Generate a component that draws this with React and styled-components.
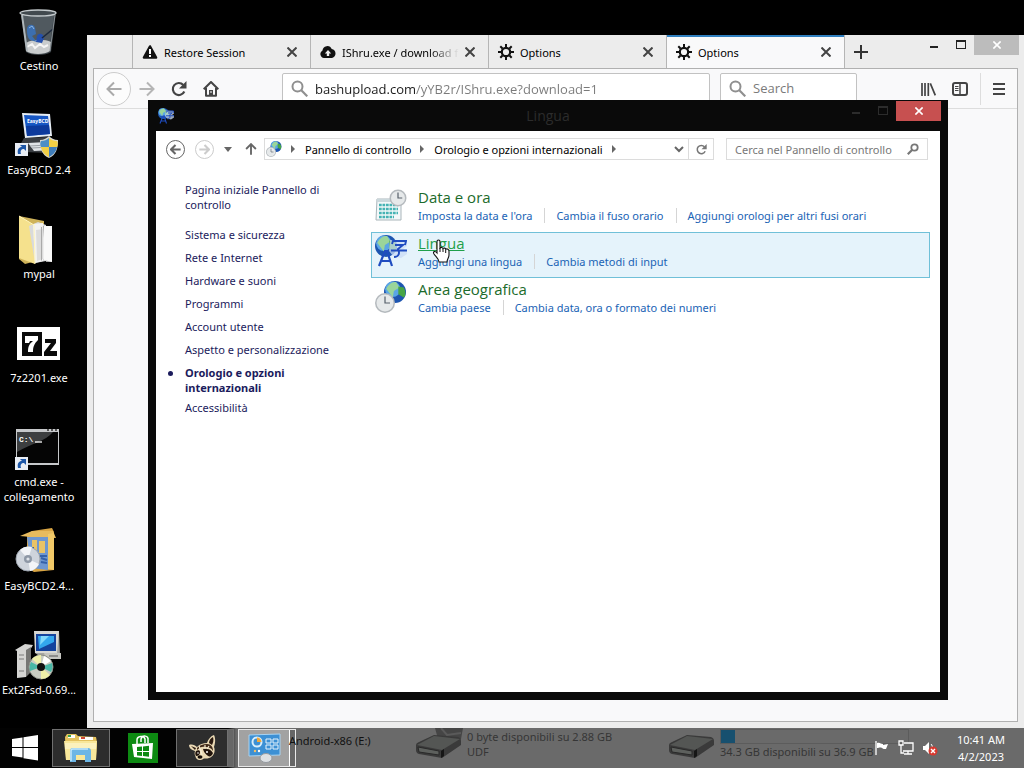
import React from 'react'
import styled, { createGlobalStyle } from 'styled-components'

const GlobalStyle = createGlobalStyle`
*{
  box-sizing:border-box;
}
body{
  margin:0;
  background:#000;
  overflow:hidden;
}
body, button, input{
  font-family:"Noto Sans", "Open Sans", sans-serif;
  font-size:11px;
  line-height:15px;
}
button{
  border:0;
  padding:0;
  background:none;
  color:inherit;
}
a{
  text-decoration:none;
}
svg{
  display:block;
  flex-shrink:0;
}
`

/* ---------- desktop icons ---------- */

const Shortcut = () => (
  <g>
    <rect x="0" y="31" width="13" height="13" fill="#e8edf4" />
    <path d="M3 42c-1-5 1-7 4-7l-2-2h6v6l-2-2c-3 0-4 2-3 5z" fill="#1d57a8" />
  </g>
)

const BinIcon = () => (
  <svg width="48" height="48" viewBox="0 0 48 48">
    <path d="M6 4h35l-5 40c-5 4-20 4-25 0z" fill="#3c4348" />
    <path d="M8 7l5 35c5 3 16 3 21 0l5-35z" fill="#596269" opacity=".7" />
    <path d="M11 35c6-4 19-4 25-1l-1 9c-5 4-19 4-24 0z" fill="#c9cccd" />
    <path d="M12 39l5-3 3 4 5-4 4 3 4-2" stroke="#f5f5f5" strokeWidth="2" fill="none" />
    <path d="M12 21c0-5 7-6 8-1l1 6-4 2 5 6-7-2c-3-3-3-8-3-11z" fill="#3c6fb0" />
    <path d="M22 28c2-4 7-2 7 2l-2 5-6-1z" fill="#2450ae" />
    <path d="M14 20l3-2 2 3" stroke="#8fb8e4" strokeWidth="1" fill="none" />
    <path d="M27 30l11-9" stroke="#1e2a3c" strokeWidth="1.5" />
    <path d="M7 7l5 36" stroke="#aeb6ba" strokeWidth="2" />
    <path d="M40 7l-5 36" stroke="#888f94" strokeWidth="1" />
    <ellipse cx="23" cy="5" rx="18" ry="3" fill="#41494e" stroke="#c4cacd" strokeWidth="1.3" />
  </svg>
)

const EasyBcdIcon = () => (
  <svg width="48" height="48" viewBox="0 0 48 48">
    <path d="M9 26l24-1 6 8-5 8-25-1-4-7z" fill="#3a3e43" />
    <path d="M13 31l18-1 8 8-20 1z" fill="#dfe3e7" />
    <path d="M15 34l17-1M17 36l18-1" stroke="#9aa0a6" />
    <path d="M7 1l28 1 2 22-27 2z" fill="#e6edf5" />
    <path d="M9 3l24 1 2 18-23 2z" fill="#1757c4" />
    <path d="M11 14l23-1 1 9-23 2z" fill="#0d3a9c" />
    <text x="12" y="11" fontSize="5" fontWeight="700" fill="#fff">EasyBCD</text>
    <path d="M25 28c4 0 7-2 9-4 2 2 5 4 9 4 0 9-2 15-9 18-7-3-9-9-9-18z" fill="#d9d9d2" />
    <path d="M34 26v9h-8c-1-2-1-4 0-6 3 0 6-1 8-3z" fill="#4d8fc6" />
    <path d="M34 26v9h8c1-2 1-4 0-6-3 0-6-1-8-3z" fill="#f2cf45" />
    <path d="M26 35h8v10c-4-2-7-5-8-10z" fill="#f2cf45" />
    <path d="M42 35h-8v10c4-2 7-5 8-10z" fill="#3f7dba" />
    <Shortcut />
  </svg>
)

const FolderIcon = () => (
  <svg width="48" height="52" viewBox="0 0 48 52">
    <path d="M4 2l25 5v38l-19 5-6-5z" fill="#cfb35a" />
    <path d="M4 2l15 9 1 39-16-6z" fill="#f5e18d" />
    <path d="M14 12l9-4 8 3v36l-11 2z" fill="#d9dadb" />
    <path d="M18 10l10-1v38l-8 2z" fill="#f2f2f2" />
    <path d="M25 12h12v36l-11-4z" fill="#ededed" />
    <path d="M21 16l7-1v30l-6 2z" fill="#dcdcdc" />
    <path d="M26 13h1v34l-1-1zM28 12h9v36h-6z" fill="#a9a9a9" />
    <path d="M29 12h8v36l-8-2z" fill="#f9f9f9" />
    <path d="M4 2l15 9 1 39" stroke="#fff5bd" fill="none" />
  </svg>
)

const SevenZipIcon = () => (
  <svg width="48" height="48" viewBox="0 0 48 48">
    <rect x="2" y="7" width="43" height="33" fill="#fff" />
    <rect x="7" y="12" width="20" height="24" fill="#0a0a0a" />
    <path d="M10 16h13v4c-4 4-5 7-5 12h-5c0-5 1-8 5-11h-3l-1 2h-4z" fill="#fff" />
    <path d="M30 19h11v4l-6 8h7v5H29v-4l7-9h-6z" fill="#0a0a0a" />
  </svg>
)

const CmdIcon = () => (
  <svg width="48" height="48" viewBox="0 0 48 48">
    <rect x="1" y="5" width="43" height="36" fill="#c6c8ca" />
    <rect x="2" y="8" width="41" height="31" fill="#050505" />
    <path d="M2 8h36c-8 10-21 11-36 20z" fill="#3d3f40" />
    <path d="M32 6h2M36 6h2M40 6h2" stroke="#555" strokeWidth="2" />
    <text x="4" y="18" fontSize="8" fontFamily="Liberation Mono" fontWeight="700" fill="#fff">C:\</text>
    <path d="M20 18h7" stroke="#fff" strokeWidth="1.3" />
    <g transform="translate(0 2)"><Shortcut /></g>
  </svg>
)

const BoxDiscIcon = () => (
  <svg width="48" height="48" viewBox="0 0 48 48">
    <path d="M17 3l20-3 2 4v38l-20 2-7-4V8z" fill="#d9a544" />
    <path d="M5 8l12-5 21 0 3 7-25-1z" fill="#e7bb5e" />
    <path d="M33 6l6-1v37l-6-1z" fill="#f1c968" />
    <path d="M12 9h21v33l-17-2z" fill="#6e97d0" />
    <path d="M17 12h5v13h-5zM24 13h6v12h-6z" fill="#e9c366" />
    <path d="M15 20h3v9h-3zM26 30l6 2M26 34l6 1M24 28h8" stroke="#3561a8" strokeWidth="2" fill="none" />
    <circle cx="13" cy="31" r="12" fill="#ced4dc" stroke="#99a1ab" />
    <path d="M13 31L5 22c4-4 9-4 12-3zM13 31l11 5c-2 4-6 7-9 7z" fill="#f3f5f8" />
    <circle cx="13" cy="31" r="4" fill="#8e98a6" />
    <circle cx="13" cy="31" r="1.6" fill="#dfe4ea" />
  </svg>
)

const InstallIcon = () => (
  <svg width="48" height="50" viewBox="0 0 48 50">
    <path d="M19 0h25v22H20z" fill="#d8d8d4" />
    <path d="M44 0l1 24-3 4H29l-9-6h22z" fill="#a5a5a0" />
    <rect x="21" y="3" width="20" height="17" fill="#15439d" />
    <path d="M23 5h16v6L24 18z" fill="#33a7ee" />
    <path d="M26 5h8l-9 9z" fill="#81d8fb" />
    <path d="M29 22h17v6H31z" fill="#c5c5c0" />
    <path d="M34 25h9" stroke="#555" />
    <path d="M0 19l10-6 8 1-3 5-4 2v25l-9 1V20z" fill="#d5d5d3" />
    <path d="M11 19l5-3v25l-5 5z" fill="#767674" />
    <path d="M4 24h5M4 28h5M4 40h5" stroke="#999" strokeWidth="1.5" />
    <circle cx="26" cy="36" r="12" fill="#c9cdc2" stroke="#8b8f87" />
    <path d="M26 36l-9-8c3-3 6-4 9-4zM26 36l9 8c-3 3-6 4-9 4z" fill="#eff0a9" />
    <path d="M26 36l11-4c1 4 0 7-1 9zM26 36l-11 4c-1-4 0-7 1-9z" fill="#48b7a6" />
    <path d="M26 36l3-11c3 1 5 3 7 5z" fill="#fff" />
    <circle cx="26" cy="36" r="4" fill="#111" />
  </svg>
)

/* ---------- small glyphs ---------- */

const Cross = ({ size = 10, width = 2 }) => (
  <svg width={size} height={size} viewBox="0 0 10 10" stroke="currentColor" strokeWidth={width} fill="none">
    <path d="M.5.5l9 9M9.5.5l-9 9" />
  </svg>
)

const MinGlyph = () => (
  <svg width="12" height="12" viewBox="0 0 12 12"><path d="M2 7h8v2H2z" fill="currentColor" /></svg>
)

const MaxGlyph = () => (
  <svg width="12" height="12" viewBox="0 0 12 12"><path d="M1 1h10v9H1zM2 3v6h8V3z" fillRule="evenodd" fill="currentColor" /></svg>
)

const WarnGlyph = () => (
  <svg width="16" height="16" viewBox="0 0 16 16">
    <path d="M8 2.500L14 13.500H2z" stroke="#111" strokeWidth="2.600" strokeLinejoin="round" fill="#111" />
    <path d="M7 5h2v5H7zM7 11h2v2H7z" fill="#fff" />
  </svg>
)

const CloudGlyph = () => (
  <svg width="16" height="16" viewBox="0 0 16 16">
    <path d="M4 14a4 4 0 0 1-1.500-7.500A4.800 4.800 0 0 1 11.700 5 4.600 4.600 0 0 1 12 14z" fill="#111" />
    <path d="M8 6l3.200 3.500H9.200V12H6.800V9.500H4.800z" fill="#f0f0f0" />
  </svg>
)

const GearGlyph = () => (
  <svg width="16" height="16" viewBox="0 0 16 16" stroke="#111" fill="none">
    <circle cx="8" cy="8" r="4.200" strokeWidth="2.200" />
    <path d="M8 0v3M8 13v3M0 8h3M13 8h3M2.300 2.300l2.200 2.200M11.500 11.500l2.200 2.200M13.700 2.300l-2.200 2.200M4.500 11.500l-2.200 2.200" strokeWidth="2" />
  </svg>
)

const LensGlyph = () => (
  <svg width="17" height="17" viewBox="0 0 17 17" stroke="#8f8f8f" fill="none">
    <circle cx="6.500" cy="6.500" r="5" strokeWidth="2" />
    <path d="M10.300 10.300l6 6" strokeWidth="2.200" />
  </svg>
)

const Arrow = ({ size = 16, width = 2, turn = 0 }) => (
  <svg width={size} height={size} viewBox="0 0 16 16" stroke="currentColor" strokeWidth={width} fill="none">
    <path d="M15.500 8H1.500M8 1.500L1.500 8 8 14.500" transform={`rotate(${turn} 8 8)`} />
  </svg>
)

const ReloadGlyph = ({ size = 16 }) => (
  <svg width={size} height={size} viewBox="0 0 16 16">
    <path d="M13.300 10.500A6 6 0 1 1 12.300 4" stroke="currentColor" strokeWidth="2.200" fill="none" />
    <path d="M15.500 0v7.500H8z" fill="currentColor" />
  </svg>
)

const HomeGlyph = () => (
  <svg width="16" height="16" viewBox="0 0 16 16">
    <path d="M.7 8.300L8 1l7.300 7.300M3 7v7.800h10V7" stroke="#444" strokeWidth="2" fill="none" strokeLinejoin="round" />
    <path d="M6 9h4v6H6z" fill="#444" />
    <path d="M8 10v2" stroke="#fff" />
  </svg>
)

const LibraryGlyph = () => (
  <svg width="16" height="14" viewBox="0 0 16 14" stroke="#444" strokeWidth="2">
    <path d="M2 1v13M5 1v13M8.300 1v13M10.300 1.300l5 12" strokeWidth="1.700" />
  </svg>
)

const SidebarGlyph = () => (
  <svg width="16" height="14" viewBox="0 0 16 14" stroke="#444" fill="none">
    <rect x="1" y="1" width="14" height="12" rx="2" strokeWidth="2" />
    <path d="M8 1v12" strokeWidth="1.500" />
    <path d="M3 4.500h3.500M3 6.500h3.500M3 8.500h3.500" />
  </svg>
)

const MenuGlyph = () => (
  <svg width="12" height="12" viewBox="0 0 12 12"><path d="M0 0h12v2H0zM0 5h12v2H0zM0 10h12v2H0z" fill="#444" /></svg>
)

const Globe = ({ cx, cy, r }) => (
  <g>
    <circle cx={cx} cy={cy} r={r} fill="#1d55b0" />
    <circle cx={cx - r * 0.2} cy={cy - r * 0.25} r={r * 0.7} fill="#5aa6e6" />
    <path
      d={`M${cx - r * 0.8} ${cy - r * 0.3}q${r * 0.4} ${-r * 0.7} ${r * 0.9} ${-r * 0.6}l${r * 0.3} ${r * 0.5}l${-r * 0.5} ${r * 0.3}l${-r * 0.1} ${r * 0.6}z`}
      fill="#9ad59a"
    />
    <path
      d={`M${cx + r * 0.3} ${cy - r * 0.5}l${r * 0.5} ${r * 0.1}q${r * 0.3} ${r * 0.6} 0 ${r * 0.9}l${-r * 0.5} ${-r * 0.3}z`}
      fill="#47a545"
    />
  </g>
)

const ClockFace = ({ cx, cy, r }) => (
  <g>
    <circle cx={cx} cy={cy} r={r} fill="#b4b9bd" />
    <circle cx={cx} cy={cy} r={r - 1.5} fill="#e6e9ea" />
    <path d={`M${cx} ${cy - r * 0.65}V${cy}H${cx + r * 0.5}`} stroke="#56606a" strokeWidth="1.200" fill="none" />
  </g>
)

const RegionIcon = ({ size = 32 }) => (
  <svg width={size} height={size} viewBox="0 0 32 32">
    <Globe cx={20} cy={11} r={11} />
    <ClockFace cx={10} cy={22} r={10} />
  </svg>
)

const LanguageIcon = ({ size = 32 }) => (
  <svg width={size} height={size} viewBox="0 0 32 32">
    <Globe cx={11} cy={11} r={11} />
    <path d="M15 5l17 1v5l-4 3 4 1v4l-6 4-8-2-4-5z" fill="#c9dcf5" opacity=".75" />
    <g stroke="#1f4cc0" fill="none" strokeWidth="1.900">
      <path d="M17 9l1-3h13l-1 4M20 10h8l-5 4c2 4 1 8-4 8M16 15.500h16" />
      <path d="M4 31l6-15h2l5 15M7 26h8" strokeWidth="2.200" />
    </g>
  </svg>
)

const DateIcon = () => (
  <svg width="32" height="32" viewBox="0 0 32 32">
    <path d="M2 10h24v21H1z" fill="#f3f8f9" stroke="#a9b5ba" />
    <path d="M2 10h24v3H2z" fill="#cbd8dc" />
    <path d="M4 16h19M4 20h19M4 24h19M4 28h15" stroke="#45b3b4" strokeWidth="2.700" strokeDasharray="2.700 .8" />
    <ClockFace cx={23} cy={9} r={8.5} />
  </svg>
)

const HandCursor = () => (
  <svg width="18" height="24" viewBox="0 0 18 24">
    <path
      d="M5 14V2.500c0-2 3-2 3 0V9c1-1 2.500-.7 3 .5 1-.8 2.400-.4 2.700.7 1.500-.7 3.300 0 3.300 2V16c0 3-2 4-2 7H7c0-3-3-5-5-8-1.500-2.500 1-3.500 3-1z"
      fill="#fff" stroke="#111" strokeWidth="1.100"
    />
    <path d="M8 9v4M11 10v3M13.700 10.500V14" stroke="#111" fill="none" />
  </svg>
)

/* ---------- taskbar drawings ---------- */

const StartLogo = () => (
  <svg width="26" height="26" viewBox="0 0 26 26" fill="#fff">
    <path d="M0 4l10.500-1.500V12H0zM11.500 2.300L26 0v12H11.500zM0 13h10.500v9.500L0 21zM11.500 13H26v12.500l-14.500-2.300z" />
  </svg>
)

const ExplorerLogo = () => (
  <svg width="34" height="30" viewBox="0 0 34 30">
    <path d="M1 4l2-3h9l2 2 18 1 1 5-1 17-30 1z" fill="#e3c15d" />
    <path d="M4 2h7v3H4zM15 4h14v3H15z" fill="#fff" />
    <path d="M4 2h3v2H4z" fill="#38a44c" /><path d="M17 4h4v2h-4z" fill="#d04b38" />
    <path d="M0 8h33l-1 19H2z" fill="#f8e79a" />
    <path d="M1 10h31v6H1z" fill="#fbf1bd" />
    <path d="M6 29V18c0-2 1-3 3-3h15c2 0 3 1 3 3v11h-6v-7h-9v7z" fill="#6cb6e6" />
    <path d="M7 28V18c0-1 1-2 2-2h15" stroke="#c3e8fb" strokeWidth="1.500" fill="none" />
  </svg>
)

const StoreLogo = () => (
  <svg width="30" height="30" viewBox="0 0 30 30">
    <rect width="30" height="30" fill="#0d8a12" />
    <path d="M9 11V7c0-4 7-5 8-1v4M13 9V6c1-4 8-4 7 1v3" stroke="#fff" strokeWidth="1.500" fill="none" />
    <path d="M4 11l21-1-1 16-18-2z" fill="#fff" />
    <path d="M9 14l5-.5V18H9zM15 13.400l6-.6V18h-6zM9 19h5v4l-5-.6zM15 19h6v4.800l-6-.7z" fill="#0d8a12" />
  </svg>
)

// raccoon head, tilted to the left
const RaccoonLogo = () => (
  <svg width="30" height="28" viewBox="0 0 30 28">
    <path d="M1 11c3-1 6 0 8 2 3-3 6-4 10-4 1-4 4-7 7-8 2 4 1 9 0 12 2 5-1 10-5 11-2 1-5 0-6 1-2 2-6 1-7-1-1-3-2-4-1-7-4-1-6-3-6-6z" fill="#ead9b4" />
    <path d="M21 9c0-3 2-5 4-6 1 3 0 6-1 8zM3 12l5 2-1 2z" fill="#2b1a10" />
    <path d="M9 14c3-3 6-4 10-4 4 0 6 3 6 7-2-3-4-4-7-4-4-1-6 0-9 3z" fill="#3f2818" />
    <path d="M15 15c4-1 8 0 10 4-1 3-3 4-5 3-2-2-4-3-5-7zM8 17c2-1 4-1 4 1 0 2-1 4-4 4-1-2-1-3 0-5z" fill="#21140c" />
    <path d="M11 12l2 5 1 4M17 11v4M21 12l-2 3" stroke="#f6ecd4" strokeWidth="1.200" fill="none" />
    <ellipse cx="12" cy="23" rx="2.500" ry="1.800" fill="#150d08" />
    <circle cx="19" cy="18" r="1" fill="#fff" />
    <circle cx="10" cy="19" r=".8" fill="#fff" />
  </svg>
)

const PanelLogo = () => (
  <svg width="34" height="30" viewBox="0 0 34 30">
    <path d="M1 2l31-1v21L1 23z" fill="#3c90d4" stroke="#a7d3f2" />
    <circle cx="9" cy="9" r="4.500" fill="none" stroke="#d9eefb" strokeWidth="2" />
    <path d="M9 4.500a4.500 4.500 0 0 1 4.500 4.500H9z" fill="#f2a83a" />
    <path d="M18 6h5v4h-5zM25 6h5v4h-5zM18 12h5v4h-5zM25 12h5v4h-5z" fill="none" stroke="#e6f4fd" />
    <circle cx="7" cy="18" r="1.200" fill="#f4c165" /><circle cx="11" cy="18" r="1.200" fill="#fff" />
    <ellipse cx="18" cy="25" rx="6" ry="4.500" fill="#dde0e3" stroke="#93999f" />
  </svg>
)

const DriveDrawing = ({ disc }) => (
  <svg width="48" height="32" viewBox="0 0 48 32">
    {disc && <path d="M20 0h28l-2 11-6 5-17-5z" fill="#454545" />}
    {disc && <path d="M26 0l6 7 14-2" stroke="#5a5a5a" strokeWidth="2" fill="none" />}
    <path d="M1 17q0-2 3-3L19 7l24 2q3 1 3 4v4L27 30 4 26q-3-1-3-4z" fill="#3a3a3a" />
    <path d="M2 17L19 8l26 3-18 11z" fill="#545654" />
    <path d="M3 19l21 4v4L4 24z" fill="#5d605d" stroke="#292929" />
    <path d="M26 23l3-2v7l-3 2z" fill="#161616" />
  </svg>
)

const FlagGlyph = () => (
  <svg width="16" height="16" viewBox="0 0 16 16">
    <path d="M2 1v14" stroke="#fff" strokeWidth="1.300" />
    <path d="M3 3c3-1 4 1 6 1v1l5-1-2 5c-2 0-3 0-4-1-2-1-3 0-5 0z" fill="#fff" />
  </svg>
)

const NetworkGlyph = () => (
  <svg width="16" height="16" viewBox="0 0 16 16" stroke="#fff" fill="none" strokeWidth="1.300">
    <path d="M6 3h9v8H5M10 11v3M6 14h8M1 1v4h4V1zM3 5v8h3" />
  </svg>
)

const SoundGlyph = () => (
  <svg width="16" height="16" viewBox="0 0 16 16">
    <path d="M1 6h2l4-4v12l-4-4H1z" fill="#fff" />
    <path d="M9 4c1 1 2 3 1 5" stroke="#fff" fill="none" />
    <circle cx="11" cy="11" r="4.500" fill="#d8392f" />
    <path d="M9 9l4 4M13 9l-4 4" stroke="#fff" strokeWidth="1.400" />
  </svg>
)

/* ---------- data ---------- */

const desktopItems = [
  { label: 'Cestino', icon: <BinIcon /> },
  { label: 'EasyBCD 2.4', icon: <EasyBcdIcon /> },
  { label: 'mypal', icon: <FolderIcon /> },
  { label: '7z2201.exe', icon: <SevenZipIcon /> },
  { label: 'cmd.exe - collegamento', icon: <CmdIcon /> },
  { label: 'EasyBCD2.4...', icon: <BoxDiscIcon /> },
  { label: 'Ext2Fsd-0.69...', icon: <InstallIcon />, oneLine: true },
]

const tabs = [
  { title: 'Restore Session', icon: <WarnGlyph /> },
  { title: 'IShru.exe / download f', icon: <CloudGlyph />, faded: true },
  { title: 'Options', icon: <GearGlyph /> },
  { title: 'Options', icon: <GearGlyph />, active: true },
]

const sideLinks = [
  'Sistema e sicurezza',
  'Rete e Internet',
  'Hardware e suoni',
  'Programmi',
  'Account utente',
  'Aspetto e personalizzazione',
  'Orologio e opzioni internazionali',
  'Accessibilità',
]

const categories = [
  { title: 'Data e ora', icon: <DateIcon />, links: ["Imposta la data e l'ora", 'Cambia il fuso orario', 'Aggiungi orologi per altri fusi orari'] },
  { title: 'Lingua', icon: <LanguageIcon />, links: ['Aggiungi una lingua', 'Cambia metodi di input'], hovered: true },
  { title: 'Area geografica', icon: <RegionIcon />, links: ['Cambia paese', 'Cambia data, ora o formato dei numeri'] },
]

/* ---------- app ---------- */

const Browser = () => (
  <BrowserWindow>
    <TabStrip>
      {tabs.map((tab, i) => (
        <Tab key={i} $active={tab.active}>
          {tab.icon}
          <TabTitle $faded={tab.faded}>{tab.title}</TabTitle>
          <TabClose aria-label="Close tab"><Cross /></TabClose>
        </Tab>
      ))}
      <NewTab aria-label="New tab">
        <svg width="14" height="14" viewBox="0 0 14 14"><path d="M6 0h2v6h6v2H8v6H6V8H0V6h6z" fill="#333" /></svg>
      </NewTab>
      <BrowserControls>
        <ControlButton aria-label="Minimize"><MinGlyph /></ControlButton>
        <ControlButton aria-label="Maximize"><MaxGlyph /></ControlButton>
        <CloseButton $color="#bcbcbc" aria-label="Close"><Cross size={8} /></CloseButton>
      </BrowserControls>
    </TabStrip>
    <BrowserBody>
      <NavBar>
        <BackButton aria-label="Back"><Arrow /></BackButton>
        <NavButton $muted aria-label="Forward"><Arrow turn={180} /></NavButton>
        <NavButton aria-label="Reload"><ReloadGlyph /></NavButton>
        <NavButton aria-label="Home"><HomeGlyph /></NavButton>
        <UrlBox>
          <LensGlyph />
          <UrlInput aria-label="Address" defaultValue="bashupload.com/yYB2r/IShru.exe?download=1" />
        </UrlBox>
        <SearchBox>
          <LensGlyph />
          <SearchInput aria-label="Search the web" placeholder="Search" />
        </SearchBox>
        <NavTools>
          <NavButton aria-label="Library"><LibraryGlyph /></NavButton>
          <NavButton aria-label="Sidebars"><SidebarGlyph /></NavButton>
          <MenuButton aria-label="Menu"><MenuGlyph /></MenuButton>
        </NavTools>
      </NavBar>
    </BrowserBody>
  </BrowserWindow>
)

const Crumb = () => (
  <svg width="5" height="8" viewBox="0 0 5 8"><path d="M0 0l4 4-4 4z" fill="#666" /></svg>
)

const ControlPanel = () => (
  <PanelWindow>
    <TitleBar>
      <TitleIcon><LanguageIcon size={16} /></TitleIcon>
      <WindowTitle>Lingua</WindowTitle>
      <PanelControls>
        <ControlButton aria-label="Riduci"><MinGlyph /></ControlButton>
        <ControlButton aria-label="Ingrandisci"><MaxGlyph /></ControlButton>
        <CloseButton $color="#c75050" aria-label="Chiudi"><Cross size={8} /></CloseButton>
      </PanelControls>
    </TitleBar>
    <PanelBody>
      <AddressRow>
        <RoundButton aria-label="Indietro"><Arrow size={11} width={3} /></RoundButton>
        <RoundButton $muted aria-label="Avanti"><Arrow size={11} width={3} turn={180} /></RoundButton>
        <HistoryButton aria-label="Percorsi recenti">
          <svg width="8" height="5" viewBox="0 0 8 5"><path d="M0 0h8L4 5z" fill="#666" /></svg>
        </HistoryButton>
        <UpButton aria-label="Su"><Arrow size={12} turn={90} width={2.5} /></UpButton>
        <Breadcrumbs>
          <RegionIcon size={16} />
          <Crumb />
          <button>Pannello di controllo</button>
          <Crumb />
          <button>Orologio e opzioni internazionali</button>
          <Crumb />
          <DropButton aria-label="Cronologia">
            <svg width="10" height="7" viewBox="0 0 10 7"><path d="M1 1l4 4 4-4" stroke="#666" strokeWidth="2" fill="none" /></svg>
          </DropButton>
          <RefreshButton aria-label="Aggiorna"><ReloadGlyph size={11} /></RefreshButton>
        </Breadcrumbs>
        <PanelSearch>
          <PanelSearchInput aria-label="Cerca" placeholder="Cerca nel Pannello di controllo" />
          <svg width="12" height="12" viewBox="0 0 12 12" stroke="#777" fill="none">
            <circle cx="7.500" cy="4.500" r="3.200" strokeWidth="1.800" /><path d="M5 7L.8 11.200" strokeWidth="2.200" />
          </svg>
        </PanelSearch>
      </AddressRow>
      <PanelContent>
        <SideNav>
          <HomeLink href="#home">Pagina iniziale Pannello di controllo</HomeLink>
          {sideLinks.map((text, i) => (
            <SideLink href="#section" key={text} $current={i === 6}>{text}</SideLink>
          ))}
        </SideNav>
        <CategoryList>
          {categories.map((cat) => (
            <Category key={cat.title} $hovered={cat.hovered}>
              {cat.icon}
              <div>
                <CategoryTitle href="#category" $hovered={cat.hovered}>{cat.title}</CategoryTitle>
                <TaskLinks>
                  {cat.links.map((link) => <TaskLink href="#task" key={link}>{link}</TaskLink>)}
                </TaskLinks>
              </div>
              {cat.hovered && <Pointer><HandCursor /></Pointer>}
            </Category>
          ))}
        </CategoryList>
      </PanelContent>
    </PanelBody>
  </PanelWindow>
)

const Taskbar = () => (
  <Bar>
    <StartButton aria-label="Start"><StartLogo /></StartButton>
    <TaskButton $open aria-label="Esplora file"><ExplorerLogo /></TaskButton>
    <TaskButton aria-label="Store"><StoreLogo /></TaskButton>
    <TaskButton $open $stacked aria-label="Mypal"><RaccoonLogo /></TaskButton>
    <TaskButton $open $stacked $current aria-label="Pannello di controllo"><PanelLogo /></TaskButton>
    <Behind>
      <DriveName>Android-x86 (E:)</DriveName>
      <DriveDrawing disc />
      <DriveText>0 byte disponibili su 2.88 GB<br />UDF</DriveText>
      <DriveDrawing />
      <Usage>
        <UsageTrack><UsageFill /></UsageTrack>
        34.3 GB disponibili su 36.9 GB
      </Usage>
    </Behind>
    <Tray>
      <button aria-label="Centro operativo"><FlagGlyph /></button>
      <button aria-label="Rete"><NetworkGlyph /></button>
      <button aria-label="Volume"><SoundGlyph /></button>
      <Clock>10:41 AM<br />4/2/2023</Clock>
    </Tray>
  </Bar>
)

const App = () => {
  return (
    <Desktop>
      <GlobalStyle />
      <IconColumn>
        {desktopItems.map((item) => (
          <DesktopItem key={item.label} $oneLine={item.oneLine}>
            <IconSlot>{item.icon}</IconSlot>
            <span>{item.label}</span>
          </DesktopItem>
        ))}
      </IconColumn>
      <Browser />
      <ControlPanel />
      <Taskbar />
    </Desktop>
  )
}

export default App

const Desktop = styled.main`
position:relative;
height:100vh;
background:#000;
display:flex;
flex-direction:column;
overflow:hidden;
`
const IconColumn = styled.div`
flex:1;
min-height:0;
width:78px;
display:grid;
grid-auto-rows:104px;
padding-top:8px;
`
const DesktopItem = styled.button`
display:flex;
flex-direction:column;
align-items:center;
justify-content:flex-start;
gap:2px;
color:#fff;
text-align:center;
white-space:${(p) => (p.$oneLine ? 'nowrap' : 'normal')};
`
const IconSlot = styled.div`
height:48px;
display:flex;
align-items:center;
`

const BrowserWindow = styled.section`
position:absolute;
top:35px;
left:87px;
right:0;
bottom:40px;
display:flex;
flex-direction:column;
padding:0 6px 6px;
background:#ececec;
`
const TabStrip = styled.div`
height:33px;
display:flex;
padding-left:39px;
`
const Tab = styled.div`
width:178px;
display:flex;
align-items:center;
gap:6px;
padding:1px 13px 0 9px;
border-left:1px solid #b5b5b5;
background:${(p) => (p.$active ? '#f9f9fa' : 'transparent')};
box-shadow:${(p) => (p.$active ? 'inset 0 2px #2f7fbf' : 'none')};
`
const TabTitle = styled.span`
flex:1;
min-width:0;
white-space:nowrap;
mask-image:${(p) => (p.$faded ? 'linear-gradient(to right, #000 75%, transparent)' : 'none')};
`
const TabClose = styled.button`
color:#444;
`
const NewTab = styled.button`
width:32px;
display:grid;
place-items:center;
border-left:1px solid #b5b5b5;
`
const BrowserControls = styled.div`
margin-left:auto;
margin-right:-1px;
display:flex;
align-items:flex-start;
color:#222;
`
const ControlButton = styled.button`
width:27px;
height:20px;
display:grid;
place-items:center;
`
const CloseButton = styled(ControlButton)`
width:45px;
color:#fff;
background:${(p) => p.$color};
`
const BrowserBody = styled.div`
flex:1;
background:#f9f9fa;
border:1px solid #b0b0b0;
`
const NavBar = styled.div`
height:40px;
display:flex;
align-items:center;
padding-left:3px;
border-bottom:1px solid #ddd;
`
const NavButton = styled.button`
width:32px;
height:32px;
display:grid;
place-items:center;
color:${(p) => (p.$muted ? '#b5b5b5' : '#444')};
`
const BackButton = styled(NavButton)`
width:34px;
height:34px;
border:1px solid #ccc;
border-radius:50%;
color:#aaa;
background:#fcfcfc;
`
const UrlBox = styled.div`
flex:1;
min-width:0;
height:32px;
margin-left:55px;
padding:0 8px;
display:flex;
align-items:center;
gap:7px;
background:#fff;
border:1px solid #c2c2c2;
border-radius:2px;
`
const UrlInput = styled.input`
flex:1;
min-width:0;
border:0;
padding:0;
outline:0;
font-family:"Open Sans", "Noto Sans", sans-serif;
font-size:13px;
line-height:20px;
color:#777;
background:linear-gradient(to right, #1a1a1a 100px, #7a7a7a 100px);
background-clip:text;
-webkit-text-fill-color:transparent;
`
const SearchBox = styled(UrlBox)`
flex:0 0 137px;
margin-left:10px;
`
const SearchInput = styled.input`
width:80px;
border:0;
padding:0;
outline:0;
font-family:"Open Sans", "Noto Sans", sans-serif;
font-size:13px;
background:none;
&::placeholder{
  color:#7a7a7a;
}
`
const NavTools = styled.div`
display:flex;
margin-left:55px;
`
const MenuButton = styled(NavButton)`
width:37px;
margin-left:4px;
border-left:1px solid #ddd;
`

const PanelWindow = styled.section`
position:absolute;
top:100px;
left:148px;
right:76px;
bottom:68px;
display:flex;
flex-direction:column;
padding:0 8px 8px;
background:#0a0a0a;
`
const TitleBar = styled.header`
height:31px;
display:grid;
grid-template-columns:1fr auto 1fr;
align-items:center;
`
const TitleIcon = styled.div`
padding-left:2px;
`
const WindowTitle = styled.h1`
margin:0;
font-family:"Open Sans", "Noto Sans", sans-serif;
font-size:14px;
line-height:20px;
font-weight:400;
color:#2c2c2c;
`
const PanelControls = styled.div`
display:flex;
align-self:start;
justify-content:flex-end;
padding-top:1px;
margin-right:-1px;
color:#2c2c2c;
`
const PanelBody = styled.div`
flex:1;
min-height:0;
background:#fff;
`
const AddressRow = styled.div`
display:flex;
align-items:center;
padding:7px 12px 0 10px;
`
const RoundButton = styled.button`
width:19px;
height:19px;
margin-right:10px;
display:grid;
place-items:center;
border:1px solid currentColor;
border-radius:50%;
color:${(p) => (p.$muted ? '#ccc' : '#666')};
`
const HistoryButton = styled.button`
width:8px;
`
const UpButton = styled.button`
margin:0 7px 0 13px;
color:#666;
`
const Breadcrumbs = styled.nav`
flex:1;
min-width:0;
height:22px;
display:flex;
align-items:center;
gap:9px;
padding-left:1px;
border:1px solid #dcdcdc;
white-space:nowrap;
`
const DropButton = styled.button`
margin-left:auto;
margin-right:-5px;
`
const RefreshButton = styled.button`
width:25px;
height:20px;
display:grid;
place-items:center;
border-left:1px solid #dcdcdc;
color:#777;
`
const PanelSearch = styled.div`
width:202px;
height:22px;
margin-left:12px;
padding:0 8px;
display:flex;
align-items:center;
border:1px solid #dcdcdc;
`
const PanelSearchInput = styled.input`
flex:1;
min-width:0;
border:0;
padding:0;
outline:0;
background:none;
&::placeholder{
  color:#777;
}
`
const PanelContent = styled.div`
display:flex;
padding:22px 10px 0 29px;
`
const SideNav = styled.nav`
width:150px;
margin-right:36px;
display:flex;
flex-direction:column;
gap:8px;
`
const SideLink = styled.a`
position:relative;
color:#1b1b5c;
font-weight:${(p) => (p.$current ? 700 : 400)};
margin-bottom:${(p) => (p.$current ? '-3px' : '0')};
&::before{
  content:'';
  display:${(p) => (p.$current ? 'block' : 'none')};
  position:absolute;
  left:-17px;
  top:6px;
  width:5px;
  height:5px;
  border-radius:50%;
  background:#1b1b5c;
}
`
const HomeLink = styled(SideLink)`
margin-bottom:7px;
`
const CategoryList = styled.div`
flex:1;
padding-top:4px;
`
const Category = styled.div`
position:relative;
height:46px;
display:flex;
gap:11px;
padding:2px 3px;
border:1px solid ${(p) => (p.$hovered ? '#70c0d8' : 'transparent')};
background:${(p) => (p.$hovered ? '#e5f3fb' : 'transparent')};
`
const CategoryTitle = styled.a`
display:block;
font-family:"Open Sans", "Noto Sans", sans-serif;
font-size:15px;
line-height:17px;
color:${(p) => (p.$hovered ? '#1fa04a' : '#1b6b2b')};
text-decoration:${(p) => (p.$hovered ? 'underline' : 'none')};
`
const TaskLinks = styled.div`
display:flex;
padding-top:2px;
`
const TaskLink = styled.a`
color:#1a63b5;
white-space:nowrap;
& + &{
  margin-left:12px;
  padding-left:11px;
  border-left:1px solid #d5d5d5;
}
`
const Pointer = styled.div`
position:absolute;
left:60px;
top:6px;
`

const Bar = styled.footer`
position:relative;
height:40px;
display:flex;
align-items:stretch;
background:linear-gradient(to right, #020202 228px, #6a6a6a 236px);
color:#fff;
overflow:hidden;
`
// what shines through the translucent bar
const Behind = styled.div`
position:absolute;
inset:0;
padding:0 115px 0 289px;
display:flex;
align-items:flex-start;
color:#363636;
white-space:nowrap;
pointer-events:none;
`
const DriveName = styled.span`
width:126px;
padding-top:5px;
color:#111;
`
const DriveText = styled.span`
width:205px;
padding:1px 0 0 4px;
`
const Usage = styled.div`
flex:1;
padding-left:4px;
`
const UsageTrack = styled.div`
height:15px;
margin-top:1px;
border:1px solid #5c5c5c;
`
const UsageFill = styled.div`
width:14px;
height:13px;
background:#17506f;
`
const StartButton = styled.button`
width:52px;
padding-right:2px;
display:grid;
place-items:center;
`
const TaskButton = styled.button`
position:relative;
width:58px;
height:38px;
margin:1px 4px 0 0;
padding-right:${(p) => (p.$stacked ? '5px' : '0')};
display:grid;
place-items:center;
border:1px solid ${(p) => (p.$current ? '#e8e8e8' : p.$open ? '#707070' : 'transparent')};
background:${(p) => (p.$current ? '#a2a2a2' : p.$open ? '#2d2d2d' : 'none')};
&::after{
  content:'';
  display:${(p) => (p.$stacked ? 'block' : 'none')};
  position:absolute;
  top:0;
  bottom:0;
  right:0;
  width:5px;
  border-left:1px solid ${(p) => (p.$current ? '#fff' : '#707070')};
  background:#666;
}
`
const Tray = styled.div`
position:relative;
margin-left:auto;
display:flex;
align-items:center;
gap:8px;
padding-right:13px;
`
const Clock = styled.time`
width:60px;
margin-left:5px;
line-height:17px;
text-align:center;
`
